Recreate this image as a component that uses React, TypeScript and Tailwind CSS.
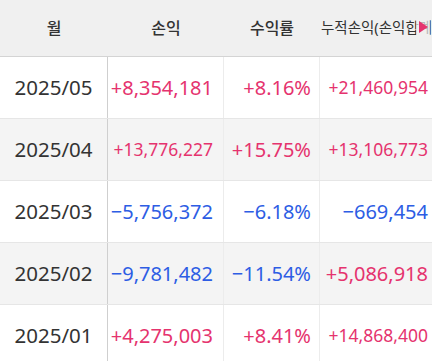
import React from "react";

type Row = { m: string; p: string; r: string; c: string; alt: boolean };

const rows: Row[] = [
  { m: "2025/05", p: "+8,354,181", r: "+8.16%", c: "+21,460,954", alt: false },
  { m: "2025/04", p: "+13,776,227", r: "+15.75%", c: "+13,106,773", alt: true },
  { m: "2025/03", p: "−5,756,372", r: "−6.18%", c: "−669,454", alt: false },
  { m: "2025/02", p: "−9,781,482", r: "−11.54%", c: "+5,086,918", alt: true },
  { m: "2025/01", p: "+4,275,003", r: "+8.41%", c: "+14,868,400", alt: false },
];

const color = (s: string) => (s.startsWith("+") ? "text-[#e5336e]" : "text-[#2d5de4]");
const size = (s: string) => (s.length >= 11 ? "text-[17.5px]" : "text-[20px]");

export default function App() {
  return (
    <div
      className="w-[432px] h-[361px] overflow-hidden bg-white text-[#333]"
      style={{ fontFamily: '"Noto Sans", "Noto Sans CJK KR", sans-serif' }}
    >
      <div className="relative grid grid-cols-[108px_116px_96px_112px] h-[57px] bg-[#f0f0f0] border-b border-[#d4d4d4]">
        <div className="flex items-center justify-center text-[16px] font-medium">월</div>
        <div className="flex items-center justify-center text-[16px] font-medium">손익</div>
        <div className="flex items-center justify-center text-[16px] font-medium">수익률</div>
        <div className="flex items-center overflow-hidden whitespace-nowrap pl-[1px] text-[14.5px]">누적손익(손익합계)</div>
        <div className="absolute right-[2px] top-[19px] w-[14px] h-[16px] flex items-center justify-center bg-[#f0f0f0]/70">
          <div className="w-0 h-0 border-y-[6px] border-y-transparent border-l-[9px] border-l-[#e5336e]" />
        </div>
      </div>
      {rows.map((r) => (
        <div
          key={r.m}
          className={`grid grid-cols-[108px_116px_96px_112px] h-[62px] border-b border-[#e6e6e6] ${r.alt ? "bg-[#f4f4f4]" : "bg-white"}`}
        >
          <div className="flex items-center justify-center border-r border-[#cfcfcf] text-[20.5px] text-[#333]">{r.m}</div>
          <div className={`flex items-center justify-end pr-[10px] border-r border-[#ececec] ${size(r.p)} ${color(r.p)}`}>{r.p}</div>
          <div className={`flex items-center justify-end pr-[8px] border-r border-[#ececec] ${size(r.r)} ${color(r.r)}`}>{r.r}</div>
          <div className={`flex items-center justify-end pr-[4px] ${size(r.c)} ${color(r.c)}`}>{r.c}</div>
        </div>
      ))}
    </div>
  );
}
